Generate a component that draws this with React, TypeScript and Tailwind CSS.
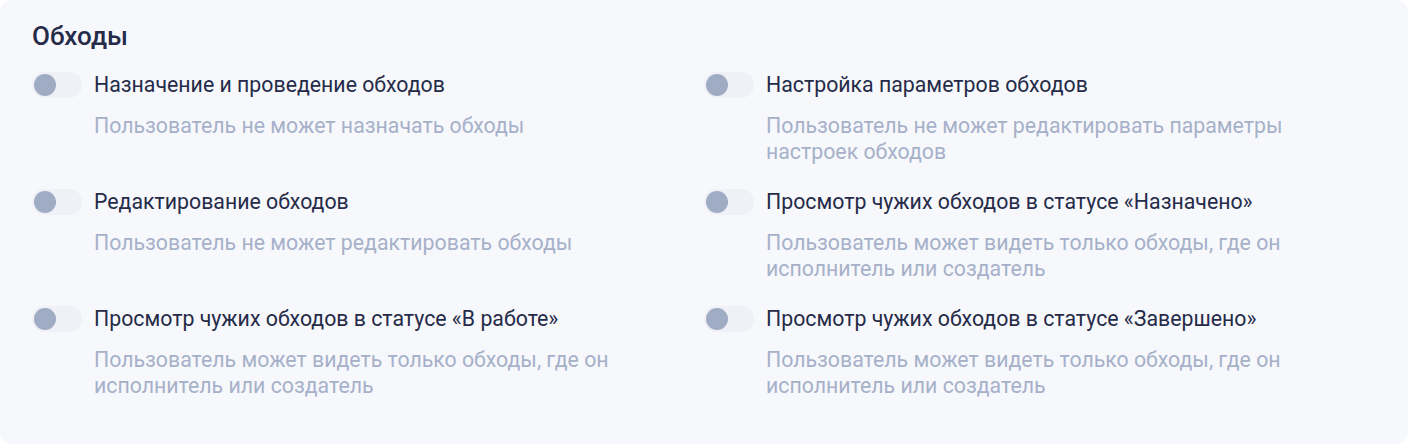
import React from 'react';

interface Permission {
  title: string;
  description: string;
}

const permissions: Permission[] = [
  {
    title: 'Назначение и проведение обходов',
    description: 'Пользователь не может назначать обходы',
  },
  {
    title: 'Настройка параметров обходов',
    description: 'Пользователь не может редактировать параметры настроек обходов',
  },
  {
    title: 'Редактирование обходов',
    description: 'Пользователь не может редактировать обходы',
  },
  {
    title: 'Просмотр чужих обходов в статусе «Назначено»',
    description: 'Пользователь может видеть только обходы, где он исполнитель или создатель',
  },
  {
    title: 'Просмотр чужих обходов в статусе «В работе»',
    description: 'Пользователь может видеть только обходы, где он исполнитель или создатель',
  },
  {
    title: 'Просмотр чужих обходов в статусе «Завершено»',
    description: 'Пользователь может видеть только обходы, где он исполнитель или создатель',
  },
];

function Toggle() {
  return (
    <button
      type="button"
      role="switch"
      aria-checked="false"
      className="shrink-0 w-[50px] h-[26px] rounded-full bg-[#eff1f6] p-[2px] flex items-center"
    >
      <span className="block w-[22px] h-[22px] rounded-full bg-[#a0abc4]" />
    </button>
  );
}

function PermissionItem({ title, description }: Permission) {
  return (
    <div className="flex gap-3">
      <Toggle />
      <div className="flex-1 max-w-[560px]">
        <div className="text-[21.3px] leading-[26px] text-[#252b48]">{title}</div>
        <div className="mt-[15px] text-[21.3px] leading-[26px] text-[#a6b1c9]">{description}</div>
      </div>
    </div>
  );
}

export default function App() {
  return (
    <div className="bg-white w-[1412px] h-[444px]" style={{ fontFamily: 'Roboto, "Noto Sans", sans-serif' }}>
      <div className="w-[1408px] h-[444px] bg-[#f7f8fc] rounded-xl px-8 pt-5">
        <h2 className="text-[26px] leading-8 font-medium text-[#252b48]">Обходы</h2>
        <div className="mt-5 grid grid-cols-2 gap-y-[24px]">
          {permissions.map((p) => (
            <PermissionItem key={p.title} title={p.title} description={p.description} />
          ))}
        </div>
      </div>
    </div>
  );
}
